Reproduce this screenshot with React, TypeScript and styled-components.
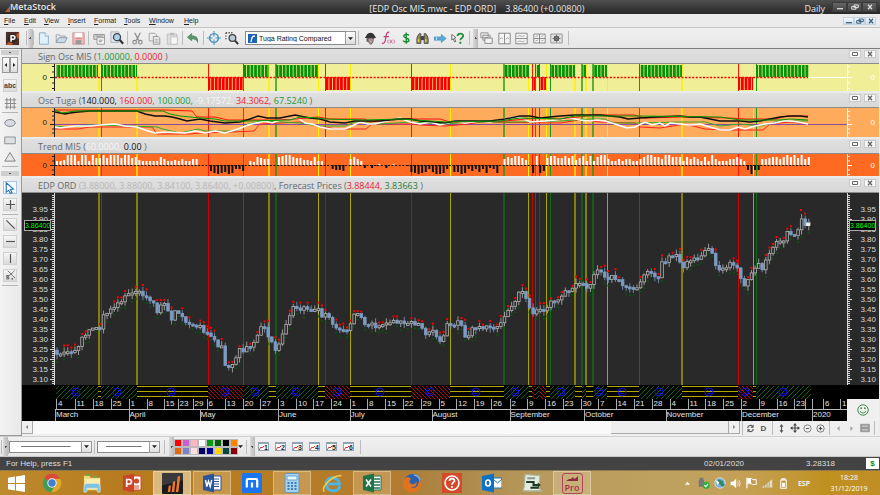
import React from "react";
import styled, { createGlobalStyle, css } from "styled-components";

const SANS = `"Liberation Sans", Arial, sans-serif`;
const UI = `"Open Sans", "Noto Sans", sans-serif`;

const GlobalStyle = createGlobalStyle`
  *, *::before, *::after { box-sizing: border-box; }
  html, body { margin: 0; padding: 0; }
  body { background: #ebebeb; font-family: ${SANS}; font-size: 8px; color: #222; overflow: hidden; }
  button, select, input { font: inherit; color: inherit; margin: 0; padding: 0; border: 0; background: none; border-radius: 0; }
  svg { display: block; }
`;

/* ---------- data ---------- */

type Tone = "y" | "g" | "r";

const X0 = 55;
const X1 = 847;
const STEP = 3.58;
const FIRST = 57;

/* x, tone and thickness of each signal line */
const LINES: [number, Tone, number][] = [
  [99, "y", 2], [101.5, "g", 1], [137, "y", 2], [208.5, "r", 1], [243.5, "g", 1], [269, "y", 2],
  [276, "g", 2], [318.5, "y", 1], [325.5, "r", 1], [350.5, "y", 1], [411.5, "r", 1], [450.5, "y", 1],
  [504, "g", 2], [528.5, "y", 1], [532.5, "r", 1], [535.5, "g", 1], [539.5, "r", 1], [546.5, "y", 1],
  [550.5, "g", 1], [575, "y", 2], [582, "g", 2], [586, "y", 2], [593, "g", 2], [607.5, "y", 1],
  [639.5, "g", 1], [682, "y", 2], [738.5, "r", 1], [753.5, "y", 1], [756.5, "g", 1],
];

/* start, end, tone and the centre of the face marker, if there is one */
const SEGMENTS: [number, number, Tone, number?][] = [
  [56, 98, "g", 76], [98, 101, "y"], [101, 137, "g", 117], [137, 208, "y", 171], [208, 243, "r", 225],
  [243, 269, "g", 255], [269, 276, "y"], [276, 318, "g", 296], [318, 325, "y"], [325, 350, "r", 337],
  [350, 411, "y", 380], [411, 450, "r", 430], [450, 504, "y", 476], [504, 529, "g", 515], [529, 532, "y"],
  [532, 535, "r"], [535, 539, "g"], [539, 546, "r"], [546, 550, "y"], [550, 575, "g", 561], [575, 582, "y"],
  [582, 586, "g"], [586, 593, "y"], [593, 607, "g", 599], [607, 639, "y", 622], [639, 682, "g", 659],
  [682, 738, "y", 709], [738, 753, "r", 745], [753, 756, "y"], [756, 811, "g", 783],
];

const TREND = [
  4, 4, 5, 10, 10, 10, 4, 10, 10, 4, 10, 7, 7, 10, 7, 10, 10, 10, 7, 10, 10, 7, 8, 5, 4, 4, 4, 4, 4, 8, 6, 4, 4, 5, 4, 6,
  4, 4, 6, 6, 0, 0, 0, -6, -8, -9, -8, -7, -9, -8, -4, -4, -6, 0, 4, 3, 8, 7, 6, 6, 0, 0, 8, 9, 10, 10, 8, 7, 7, 5, 5, 4,
  8, 4, 4, 0, 0, -4, -5, -5, -6, 0, 6, 8, 6, 4, -3, 0, -3, -1, 1, 0, -3, 0, 1, 0, 0, 0, -1, -7, -8, -9, -8, -7, -4, -7,
  -9, -9, -8, -4, 0, -7, -7, -9, -8, -4, -6, -4, -7, -4, -8, -3, -4, -8, 0, 6, 8, 7, 9, 9, 7, 5, 0, -8, 9, -8, -6, 7, 9,
  9, 7, 7, 9, 7, 9, 5, 7, 9, 4, 9, 4, 8, 10, 10, 6, 4, 4, 6, 4, 6, 6, 4, 4, 6, 8, 10, 10, 8, 8, 6, 10, 10, 8, 8, 8, 4, 8,
  6, 8, 6, 4, 8, 4, 10, 6, 4, 4, 4, 6, 6, 8, 6, 4, -5, -9, -5, -5, 6, 6, 7, 8, 8, 6, 8, 10, 8, 10, 7, 10, 6, 8, 10, 6, 8, 6,
];

const PRICE: [number, number][] = [
  [57, 352], [63, 354], [67, 353], [70, 355], [73, 348], [76, 353], [78, 347], [80, 342], [83, 338], [87, 332],
  [90, 330], [93, 328], [97, 328], [101, 330], [103, 317], [106, 313], [110, 310], [115, 305], [120, 302], [125, 298],
  [130, 295], [137, 291], [142, 295], [147, 298], [150, 302], [155, 303], [158, 313], [161, 305], [165, 302],
  [168, 313], [172, 320], [176, 311], [180, 313], [183, 320], [187, 323], [192, 324], [198, 325], [202, 330],
  [207, 335], [212, 337], [216, 343], [219, 351], [221, 343], [224, 366], [229, 367], [234, 365], [237, 355],
  [240, 345], [243, 351], [247, 345], [251, 347], [254, 343], [257, 335], [260, 327], [264, 327], [267, 335],
  [270, 342], [274, 347], [277, 352], [281, 338], [285, 330], [288, 322], [291, 310], [294, 305], [298, 308],
  [303, 309], [308, 310], [313, 313], [318, 308], [321, 315], [326, 315], [331, 320], [335, 327], [340, 330],
  [345, 332], [350, 327], [353, 320], [356, 311], [360, 315], [363, 323], [367, 327], [372, 325], [378, 327],
  [383, 323], [390, 323], [397, 322], [405, 323], [413, 323], [420, 325], [424, 334], [429, 335], [432, 328],
  [436, 337], [441, 342], [444, 335], [448, 323], [455, 323], [460, 322], [463, 333], [467, 339], [471, 330],
  [476, 327], [483, 327], [490, 328], [497, 325], [503, 320], [507, 313], [511, 307], [515, 300], [519, 290],
  [524, 292], [528, 303], [532, 312], [535, 314], [538, 303], [541, 313], [546, 312], [550, 303], [555, 300],
  [562, 297], [567, 291], [573, 288], [578, 284], [585, 285], [590, 288], [594, 275], [598, 268], [602, 274],
  [607, 277], [613, 278], [620, 280], [627, 289], [634, 290], [640, 283], [643, 275], [648, 272], [653, 276],
  [658, 278], [662, 263], [666, 260], [671, 255], [677, 253], [681, 268], [686, 263], [692, 260], [699, 257],
  [706, 249], [711, 252], [714, 260], [717, 269], [722, 270], [728, 265], [734, 263], [738, 267], [741, 280],
  [745, 288], [749, 277], [753, 270], [757, 265], [762, 268], [766, 260], [770, 253], [774, 247], [778, 237],
  [783, 241], [788, 232], [793, 233], [797, 237], [801, 219], [805, 227], [808, 224],
];

const priceAt = (x: number) => {
  const i = PRICE.findIndex((p) => p[0] >= x);
  if (i <= 0) return i === 0 ? PRICE[0][1] : PRICE[PRICE.length - 1][1];
  const [xa, ya] = PRICE[i - 1];
  const [xb, yb] = PRICE[i];
  return ya + ((yb - ya) * (x - xa)) / (xb - xa);
};

const noise = (n: number) => {
  const v = Math.sin(n * 127.1 + 31.7) * 43758.5453;
  return v - Math.floor(v);
};

const CANDLES = Array.from({ length: 211 }, (_, i) => {
  const x = FIRST + i * STEP;
  const a = priceAt(x - STEP) + (noise(i) - 0.5) * 5;
  const b = priceAt(x) + (noise(i + 1) - 0.5) * 5;
  const top = Math.min(a, b);
  const bottom = Math.max(a, b, top + 2);
  return {
    x, top, bottom, up: b <= a,
    high: top - noise(i + 300) * 5,
    low: bottom + noise(i + 700) * 5,
    sell: noise(i + 50) > 0.42,
    buy: noise(i + 90) > 0.5,
  };
});

const OSC: { color: string; width: number; points: string }[] = [
  { color: "#f22", width: 1, points: "55,129 78,129 90,127 152,127 157,134 180,134 190,134 200,133 232,132 254,131 260,124 300,122 318,126 330,128 335,129 366,129 372,124 410,124 420,125 445,126 468,124 480,122 560,123 580,120 600,122 635,123 640,127 660,128 685,124 705,129 725,130 763,130 770,124 790,122 808,124" },
  { color: "#3a3", width: 1, points: "55,126 65,127 90,125 130,126 157,127 163,129 180,133 198,129 205,131 235,131 248,124 262,121 300,123 320,126 345,126 355,122 380,124 410,122 445,124 470,122 520,122 560,121 590,119 605,119 613,123 640,123 680,122 705,122 720,126 740,124 760,126 780,121 808,121" },
  { color: "#fff", width: 1.5, points: "55,127 60,128 75,126 90,126 100,125 115,124 125,126 137,127 145,130 155,133 165,132 185,133 195,131 205,133 215,131 225,133 238,129 248,125 256,123 265,121 272,123 280,120 290,119 298,118 305,123 312,124 320,127 330,129 345,129 352,126 360,122 368,124 375,124 390,120 400,118 410,122 420,124 430,122 440,125 455,121 465,123 480,121 490,122 500,120 515,117 522,118 530,122 545,121 555,120 570,118 580,120 590,121 597,120 605,121 615,124 627,128 635,127 645,122 652,125 660,123 665,126 670,123 680,124 690,125 700,124 710,127 720,130 730,130 738,127 745,129 755,126 765,124 775,123 783,121 790,121 798,122 808,124" },
  { color: "#f11", width: 1, points: "55,110 165,110 192,111 197,117 215,117 228,120 275,120 295,119 318,117 330,119 365,119 370,122 395,119 440,119 450,122 505,121 525,119 545,118 560,119 595,115 634,115 645,118 680,117 730,118 745,119 775,119 787,116 808,116" },
  { color: "#111", width: 1.5, points: "55,112 60,113 65,114 70,113 78,112 90,111 110,111 137,111 145,114 155,116 165,116 172,117 180,119 187,121 200,119 210,121 225,123 240,122 250,119 258,116 267,118 280,118 290,116 295,115 300,116 310,118 320,119 330,122 345,123 355,121 370,121 380,121 390,120 400,119 410,119 420,121 435,122 445,123 455,121 470,121 490,121 505,119 520,116 530,116 540,118 550,117 560,116 575,115 590,115 600,115 610,116 620,117 628,119 640,118 655,117 680,116 690,117 700,117 710,119 720,121 730,121 740,121 750,122 760,121 770,119 780,117 790,116 800,116 808,117" },
  { color: "#090", width: 1, points: "55,110 62,113 75,111 163,111 170,114 180,116 200,118 215,119 225,121 250,121 290,120 300,117 318,118 325,119 365,120 400,119 415,120 445,122 500,121 520,118 560,119 575,116 640,116 720,117 740,120 780,120 790,119 808,120" },
];

const WEEKS: [number, string][] = [
  [56, "4"], [74.5, "11"], [92.5, "18"], [110.5, "25"], [128.5, "1"], [146.5, "8"], [163.5, "15"], [177.5, "23"],
  [192.5, "29"], [206.5, "6"], [224.5, "13"], [242.5, "20"], [260, "27"], [278, "3"], [296, "10"], [313, "17"],
  [331, "24"], [349.5, "1"], [367, "8"], [385, "15"], [402.5, "22"], [420.5, "29"], [438.5, "5"], [456, "12"],
  [473.5, "19"], [491, "26"], [509.5, "2"], [527, "9"], [545, "16"], [562.5, "23"], [580.5, "30"], [598, "7"],
  [615.5, "14"], [633.5, "21"], [651.5, "28"], [669.5, "4"], [687.5, "11"], [705, "18"], [723, "25"], [740.5, "2"],
  [758.5, "9"], [776.5, "16"], [794, "23"], [805, ""], [812, ""], [823, "6"], [840, "1"],
];
const MONTHS: [number, string][] = [
  [55, "March"], [128.5, "April"], [199.5, "May"], [278, "June"], [349.5, "July"], [431.5, "August"],
  [509.5, "September"], [584, "October"], [665.5, "November"], [741, "December"], [812, "2020"],
];
const PRICES = Array.from({ length: 18 }, (_, i) => (3.95 - i * 0.05).toFixed(2));

const columns = (cells: [number, string][]) =>
  cells.map((c, i) => `minmax(0, ${(i + 1 < cells.length ? cells[i + 1][0] : X1) - c[0]}fr)`).join(" ");

/* ---------- frame ---------- */

const Window = styled.div`
  min-height: 100vh;
  display: flex;
  flex-direction: column;
`;
const TitleBar = styled.header`
  height: 14px;
  display: flex;
  align-items: center;
  background: linear-gradient(#505050, #3c3c3c 45%, #282828);
  color: #e8e8e8;
  font: 9px/14px ${UI};
  white-space: pre;
`;
const Brand = styled.div`
  flex: 1;
  display: flex;
  align-items: center;
  padding-left: 5px;
  font-weight: 600;
  svg { margin-right: -2px; }
`;
const Caption = styled.div`
  display: flex;
  gap: 9px;
  padding-top: 4px;
  margin-right: 220px;
`;
const Period = styled.div`
  padding-top: 4px;
  margin-right: 7px;
`;
const CapButtons = styled.div<{ $light?: boolean }>`
  display: flex;
  margin-right: ${(p) => (p.$light ? 4 : 3)}px;
  button {
    width: ${(p) => (p.$light ? 11 : 15)}px;
    height: ${(p) => (p.$light ? 8 : 10)}px;
    display: grid;
    place-items: center;
    border: 1px solid ${(p) => (p.$light ? "#c3d3df" : "#3b3b3b")};
    background: ${(p) => (p.$light ? "linear-gradient(#f3f9fc,#cfe0ea)" : "linear-gradient(#666,#444)")};
    color: ${(p) => (p.$light ? "#416080" : "#ddd")};
  }
`;
const MenuBar = styled.nav`
  height: 14px;
  display: flex;
  align-items: center;
  border-bottom: 1px solid #c4c4c4;
  background: #ebebeb;
  font-size: 7px;
  padding-left: 4px;
`;
const MenuItem = styled.button<{ $w: number }>`
  width: ${(p) => p.$w}px;
  text-align: left;
  line-height: 12px;
  &::first-letter { text-decoration: underline; }
`;
const Spacer = styled.div`flex: 1;`;

const bar = css`
  display: flex;
  align-items: center;
  background: linear-gradient(#f1f1f1, #e6e6e6);
`;
const ToolBar = styled.div`
  ${bar}
  height: 21px;
  border-bottom: 1px solid #7d7d7d;
`;
const Tool = styled.button<{ $w?: number }>`
  width: ${(p) => p.$w ?? 18}px;
  height: 16px;
  flex: none;
  display: grid;
  place-items: center;
`;
const Sep = styled.i<{ $m?: number }>`
  width: 1px;
  height: 14px;
  margin: 0 ${(p) => p.$m ?? 1}px;
  background: #bdbdbd;
  flex: none;
`;
const Grip = styled.i`
  flex: none;
  width: 5px;
  height: 19px;
  background: radial-gradient(circle, #555 1px, transparent 1px), linear-gradient(90deg, #dadada, #b9b9b9);
`;
const Combo = styled.select<{ $w: number; $line?: boolean }>`
  appearance: none;
  flex: none;
  width: ${(p) => p.$w}px;
  height: ${(p) => (p.$line ? 12 : 14)}px;
  padding-left: ${(p) => (p.$line ? 2 : 13)}px;
  border: 1px solid #888;
  border-right: 0;
  font-size: 7px;
  color: #111;
  background: ${(p) => (p.$line ? "linear-gradient(#777,#777) center / 70% 1px no-repeat #fff" : "#fff")};
`;
const ComboWrap = styled.label<{ $gap?: number }>`
  display: flex;
  align-items: center;
  position: relative;
  flex: none;
  margin-left: ${(p) => p.$gap ?? 0}px;
  > svg:first-child { position: absolute; left: 3px; }
`;
const Drop = styled.span<{ $h: number }>`
  width: 11px;
  height: ${(p) => p.$h}px;
  display: grid;
  place-items: center;
  border: 1px solid #999;
  background: linear-gradient(#fff, #ddd);
`;

const Body = styled.div`
  flex: 1;
  display: flex;
  min-height: 387px;
`;
const Side = styled.aside`
  width: 22px;
  flex: none;
  display: flex;
  flex-direction: column;
  align-items: center;
  padding-right: 1px;
  border-right: 1px solid #999;
  border-bottom: 1px solid #999;
  background: linear-gradient(90deg, #f3f3f3, #e9e9e9);
`;
const SideGrip = styled.i<{ $gap: number }>`
  width: 18px;
  height: 5px;
  margin: ${(p) => p.$gap}px 0;
  flex: none;
  background: radial-gradient(circle, #555 1px, transparent 1px), #cfcfcf;
`;
const SideSep = styled.i`
  width: 16px;
  height: 1px;
  margin: 1px 0;
  background: #b5b5b5;
  flex: none;
`;
const SideTool = styled.button<{ $on?: boolean; $flat?: boolean }>`
  width: 14px;
  height: 13px;
  margin: 2px 0;
  flex: none;
  display: grid;
  place-items: center;
  border: 1px solid ${(p) => (p.$on ? "#a8c4e0" : p.$flat ? "transparent" : "#d0d0d0")};
  background: ${(p) => (p.$on ? "#f4f9ff" : p.$flat ? "none" : "linear-gradient(#f6f6f6,#dadada)")};
  color: #444;
  font-weight: bold;
  font-size: 7px;
  line-height: 8px;
`;
const Pager = styled.div`
  display: flex;
  margin: 1px 0 4px;
  button {
    width: 8px;
    height: 16px;
    display: grid;
    place-items: center;
    border: 1px solid #999;
    background: linear-gradient(#fff, #ddd);
  }
`;
const Charts = styled.main`
  flex: 1;
  min-width: 0;
  display: flex;
  flex-direction: column;
  padding-right: 1px;
`;
const Panel = styled.section<{ $grow?: boolean }>`
  display: flex;
  flex-direction: column;
  flex: ${(p) => (p.$grow ? "1 0 auto" : "none")};
  margin-bottom: ${(p) => (p.$grow ? 0 : 2)}px;
`;
const PanelHead = styled.div`
  height: 15px;
  display: flex;
  align-items: center;
  padding: 1px 3px 0 16px;
  background: linear-gradient(#e0e0e0, #d8d8d8);
  border-bottom: 1px solid #8c8c8c;
  color: #646a70;
  font: 9px/14px ${UI};
  white-space: pre;
`;
const Ink = styled.span<{ $c: string }>`color: ${(p) => p.$c};`;
const PanelButton = styled.button`
  width: 12px;
  height: 8px;
  margin: 0 0 5px 3px;
  display: grid;
  place-items: center;
  border: 1px solid #c9c9c9;
  background: #f8f8f8;
  color: #666;
`;
const Plot = styled.div<{ $bg: string; $h: number; $grow?: boolean }>`
  display: flex;
  min-height: ${(p) => p.$h}px;
  flex: ${(p) => (p.$grow ? "1 0 auto" : "none")};
  background: ${(p) => p.$bg};
`;
const Axis = styled.div<{ $right?: boolean; $c: string }>`
  width: ${(p) => (p.$right ? 32 : 33)}px;
  flex: none;
  display: flex;
  position: relative;
  flex-direction: ${(p) => (p.$right ? "row-reverse" : "row")};
  align-items: stretch;
  color: ${(p) => p.$c};
  padding-right: ${(p) => (p.$right ? 3 : 0)}px;
`;
const AxisLabels = styled.div<{ $many?: boolean }>`
  flex: 1;
  padding-top: ${(p) => (p.$many ? 12 : 1)}px;
  display: flex;
  flex-direction: column;
  justify-content: ${(p) => (p.$many ? "space-between" : "center")};
  text-align: right;
  line-height: 10px;
  padding-right: ${(p) => (p.$many ? 0 : 1)}px;
`;
const Tag = styled.output`
  position: absolute;
  top: 14%;
  left: 2px;
  width: 27px;
  height: 11px;
  border: 1px solid #aaa;
  background: #000;
  color: #0f0;
  font-size: 7px;
  line-height: 9px;
  text-align: center;
`;
const PlotSvg = styled.svg`
  flex: 1;
  min-width: 0;
  width: 100%;
  height: auto;
  align-self: stretch;
`;
const Ribbon = styled.div`
  height: 14px;
  display: flex;
  padding: 0 32px 0 33px;
  background: #000;
`;
const Timeline = styled.div`
  height: 22px;
  display: flex;
  background: #000;
  padding-left: 33px;
`;
const Scale = styled.div`
  flex: 1;
  min-width: 0;
  color: #e4e4e4;
`;
const ScaleRow = styled.div<{ $cols: string; $line?: boolean }>`
  display: grid;
  grid-template-columns: ${(p) => p.$cols};
  height: 11px;
  line-height: 10px;
  padding-left: ${(p) => (p.$line ? 1 : 0)}px;
  border-bottom: ${(p) => (p.$line ? "1px solid #bbb" : "0")};
  span { padding-left: ${(p) => (p.$line ? 2 : 1)}px; box-shadow: inset 1px 0 #aaa; white-space: nowrap; }
`;
const Face = styled.div`
  width: 32px;
  display: grid;
  place-items: center;
  background: #f0f0f0;
`;
const ScrollRow = styled.div`
  height: 15px;
  display: flex;
  align-items: flex-start;
  background: #efefef;
`;
const ScrollButton = styled.button`
  width: 11px;
  height: 13px;
  flex: none;
  display: grid;
  place-items: center;
  border: 1px solid #aaa;
  border-width: 0 1px 1px 0;
  background: #f0f0f0;
`;
const Track = styled.div`
  flex: 1;
  height: 13px;
  display: flex;
  justify-content: flex-end;
  background: #f9f9f9;
  &::after {
    content: "";
    width: 17%;
    border: 1px solid #aaa;
    border-width: 0 1px 1px 0;
    background: #eee;
  }
`;
const NavTool = styled.button`
  width: 13px;
  height: 13px;
  flex: none;
  display: grid;
  place-items: center;
  color: #555;
  font: bold 8px/13px ${SANS};
`;
const NavTools = styled.div`
  width: 139px;
  flex: none;
  display: flex;
  align-items: center;
  padding-left: 1px;
`;
const DrawBar = styled.div`
  ${bar}
  height: 21px;
  border-top: 1px solid #d0d0d0;
  border-bottom: 1px solid #c8c8c8;
`;
const Palette = styled.div`
  display: grid;
  grid-template-columns: repeat(8, 6px);
  grid-auto-rows: 6px;
  gap: 2px;
  margin: 0 1px;
`;
const Swatch = styled.button<{ $c: string }>`
  background: ${(p) => p.$c};
  box-shadow: 0 0 0 1px #bbb;
`;
const Template = styled.button`
  width: 17px;
  flex: none;
  display: grid;
  place-items: center;
  span {
    width: 11px;
    height: 9px;
    display: flex;
    align-items: center;
    justify-content: center;
    border: 1px solid #92a4b2;
    border-top-width: 2px;
    background: #fff;
    font: bold 7px/7px ${SANS};
  }
`;
const StatusBar = styled.footer`
  height: 13px;
  display: flex;
  align-items: center;
  padding-left: 6px;
  background: #434343;
  color: #dedede;
  line-height: 13px;
`;
const StatusCell = styled.span<{ $gap: number }>`margin-right: ${(p) => p.$gap}px;`;
const Money = styled.span`
  width: 13px;
  height: 11px;
  background: #fff;
  color: #0a8a1a;
  font-weight: bold;
  line-height: 11px;
  text-align: center;
  margin-right: 1px;
`;
const TaskBar = styled.div`
  height: 25px;
  display: flex;
  align-items: center;
  border-top: 1px solid #8e7a4c;
  background: linear-gradient(90deg, #bd8a2c 0%, #b77a1f 14%, #b77d24 32%, #b27b30 45%, #ab8748 51%, #b89a5e 62%, #c0a25f 78%, #c4a054 85%, #c0901f 94%, #bf8f26 100%);
`;
const Task = styled.button<{ $w?: number; $on?: 1 | 2 }>`
  width: ${(p) => p.$w ?? 38}px;
  height: 24px;
  margin: 0 ${(p) => (p.$w ? 0 : 1)}px;
  flex: none;
  display: grid;
  place-items: center;
  ${(p) => p.$on && css`
    background: rgba(255, 245, 220, ${p.$on === 1 ? 0.5 : 0.22});
    box-shadow: inset 0 0 0 1px rgba(255, 250, 230, 0.35);
  `}
`;
const ProBadge = styled.span`
  width: 21px;
  height: 21px;
  display: flex;
  flex-direction: column;
  align-items: center;
  justify-content: flex-end;
  border: 1px solid #b0455a;
  border-radius: 3px;
  color: #a8304a;
  font: 600 9px/11px ${UI};
`;
const Tray = styled.div`
  display: flex;
  align-items: center;
  margin-left: auto;
  color: #fff;
  font: 7px/11px ${UI};
`;
const Lang = styled.span`
  margin: 0 19px 0 5px;
  font-weight: 600;
`;
const Clock = styled.time`
  width: 40px;
  margin-right: 11px;
  text-align: center;
`;

/* ---------- icons ---------- */

const G = ({ s = 13, children, vb = 16 }: { s?: number; vb?: number; children: React.ReactNode }) => (
  <svg width={s} height={s} viewBox={`0 0 ${vb} ${vb}`} fill="none" aria-hidden="true">{children}</svg>
);
const Caret = ({ d = "down", c = "#222", s = 5 }: { d?: "down" | "left" | "right" | "up"; c?: string; s?: number }) => (
  <svg width={s} height={s} viewBox="0 0 6 6" aria-hidden="true">
    <path fill={c} d={{ down: "M0 1.5h6L3 4.8z", left: "M4.5 0v6L1 3z", right: "M1.5 0v6L5 3z", up: "M0 4.5h6L3 1z" }[d]} />
  </svg>
);
const WinGlyph = ({ k }: { k: "min" | "res" | "x" | "max" }) => (
  <svg width="8" height="6" viewBox="0 0 8 6" fill="none" stroke="currentColor" strokeWidth="1.3" aria-hidden="true">
    {k === "min" && <path d="M1 4.7h6" />}
    {k === "res" && <path d="M3 1h4.3v2.6H3zM.7 2.6H5v2.6H.7z" strokeWidth="1" />}
    {k === "x" && <path d="M2 .8l4 4.4M6 .8L2 5.2" />}
    {k === "max" && <path d="M1.5 1.5h5v3h-5z" strokeWidth="1" />}
  </svg>
);

const I = {
  power: <G s={15}><rect x="1" y="1" width="14" height="14" fill="#4a3028" /><path d="M1 15L15 1v6L7 15z" fill="#c05a28" /><circle cx="8" cy="8" r="5" fill="#322825" /><path d="M6.5 11.5V5h2.2a1.8 1.8 0 010 3.8H6.5" stroke="#fff" strokeWidth="1.6" /></G>,
  doc: <G><path d="M3 1h7l4 4v10H3z" fill="#dff1fb" stroke="#7fa3bb" /><path d="M10 1v4h4" stroke="#7fa3bb" fill="#fff" /></G>,
  folder: <G><path d="M1.5 13V3.5h4l1 1.500h6v2" stroke="#8a949c" fill="#eee" /><path d="M1.500 13l3-6H15l-3 6z" fill="#c9dbe6" stroke="#7d8f9c" /></G>,
  save: <G><path d="M1 1h14v14H1z" fill="#f0b9ba" stroke="#c58a8c" /><path d="M3.500 1h9v6h-9z" fill="#fff" /><path d="M4.500 10h7v5h-7z" fill="#999" /><path d="M4 7.500h8" stroke="#e05050" /></G>,
  print: <G><path d="M1 3h13v6H1z" fill="#ddd" stroke="#888" /><path d="M5 7h9v8H5z" fill="#fff" stroke="#888" /><path d="M3 5h9M7 10h5M7 12h4" stroke="#777" /></G>,
  preview: <G s={14}><path d="M1 1h9v12H1z" fill="#dfe7ec" stroke="#aab" /><circle cx="8" cy="7" r="4" fill="#a8d4ec" stroke="#444" strokeWidth="1.500" /><path d="M11 10l4 4.500" stroke="#333" strokeWidth="2.400" /></G>,
  cut: <G><path d="M4.500 1l5 9.500M11.500 1l-5 9.500" stroke="#888" strokeWidth="1.500" /><circle cx="4.500" cy="12.500" r="2.200" stroke="#888" strokeWidth="1.400" /><circle cx="11.500" cy="12.500" r="2.200" stroke="#888" strokeWidth="1.400" /></G>,
  copy: <G><path d="M1.500 1.500h7l2 2V11h-9z" fill="#eee" stroke="#999" /><path d="M6.500 5.500h6l2 2V15h-8z" fill="#eee" stroke="#888" /><path d="M8 9h5M8 11h5M8 13h5" stroke="#aaa" /></G>,
  paste: <G><path d="M1.500 2.500h12V15h-12z" fill="#ddd" stroke="#bbb" /><path d="M5 1h5v3H5z" fill="#bbb" /><path d="M6 6h8v9H6z" fill="#f7f7f7" stroke="#bbb" /></G>,
  undo: <G s={14}><path d="M1 7l6-5v3c5 0 8 3 6.500 9-1-3-3-4.500-6.500-4.500V12z" fill="#58936c" /></G>,
  target: <G s={14}><circle cx="8" cy="8" r="5" stroke="#3b8cbc" strokeWidth="1.700" /><path d="M8 0v16M0 8h16" stroke="#4b9cc8" strokeWidth="1.300" /><circle cx="8" cy="8" r="1.700" fill="#e9f4fa" /></G>,
  zoom: <G s={14}><path d="M1 2h9M1 2v9" stroke="#555" strokeDasharray="1.500 1.500" strokeWidth="1.500" /><circle cx="8.500" cy="8" r="3.800" fill="#bcd" stroke="#444" strokeWidth="1.500" /><path d="M11.500 11l3.500 4" stroke="#333" strokeWidth="2.200" /></G>,
  expert: <G s={13}><path d="M1 7C3 6 3 1 8 1s5 5 7 6c-4 1.500-10 1.500-14 0z" fill="#333" /><path d="M5 7.500h6.500c0 5-1.500 7-3 7.500C7 15 5 12 5 7.500z" fill="#b99" stroke="#444" /><path d="M4 8v4" stroke="#444" strokeWidth="1.500" /></G>,
  fx: <G s={14}><path d="M9.500 1.500C6.500.5 6 4 5.400 8S4 15 1 14M3 6.500h6" stroke="#c53a7a" strokeWidth="1.400" /><path d="M8.500 10c-1 1-1 3 0 4M10 10l3 4M13 10l-3 4M14.500 10c1 1 1 3 0 4" stroke="#cf5b8e" /></G>,
  dollar: <G s={12}><path d="M12 4.500C10 2.500 5 3 5 5.500S12 8 12 11 6 14 4 11.500M8.300.5v15" stroke="#148a2c" strokeWidth="1.800" /></G>,
  bino: <G s={13}><path d="M2 5l2-3h2v12H1V8zM14 5l-2-3h-2v12h5V8z" fill="#8d8a62" stroke="#444" /><path d="M6 5h4v5H6z" fill="#444" /><path d="M3 9v3M12 9v3" stroke="#ecd24a" strokeWidth="1.700" /></G>,
  arrow: <G s={13}><path d="M0 6h9V3l6 5-6 5v-3H0z" fill="#5aa9d6" stroke="#2f7db4" strokeWidth=".6" /><path d="M3 6v4" stroke="#fff" strokeWidth=".8" /></G>,
  help: <G s={13}><path d="M1 3l5 4-2 .5 2 4-1.500.7-2-4L1 10z" fill="#fff" stroke="#555" /><path d="M8 5c0-4 7-4 7-.3 0 2.600-3.500 2.600-3.500 5.300" stroke="#1b8c37" strokeWidth="2.200" /><circle cx="11.500" cy="13.300" r="1.400" fill="#1b8c37" /></G>,
  w1: <G><path d="M1 1h9v6H1zM3.500 4h9v6h-9z" fill="#e8e8e8" stroke="#888" /><path d="M6 7.500h9V14H6z" fill="#f4f4f4" stroke="#777" /></G>,
  w2: <G><path d="M1 1.500h14v13H1zM8 1.500v13" fill="#f4f4f4" stroke="#777" /><path d="M2 9l2-2 2 1.500M9.500 9l2-2 2 1.500" stroke="#999" /></G>,
  w3: <G><path d="M1 1.500h14v13H1zM1 8h14" fill="#f4f4f4" stroke="#777" /><path d="M3 5.500l3-1 3 1 3-1M3 12l3-1 3 1 3-1" stroke="#999" /></G>,
  w4: <G><path d="M1 2.500h14v11H1zM1 8h14M8 2.500v11" fill="#f4f4f4" stroke="#777" /><path d="M3 5.500l3-1M10 5.500l3-1M3 11l3-1M10 11l3-1" stroke="#999" /></G>,
  w5: <G><path d="M1 2.500h14v11H1z" fill="#e6e6e6" stroke="#888" /><circle cx="8" cy="8" r="2.500" stroke="#555" strokeWidth="1.800" /><path d="M8 3v10M3 8h10M4.500 4.500l7 7M11.500 4.500l-7 7" stroke="#666" strokeWidth="1" /></G>,
  grid: <G s={13}><path d="M1 3.500h14M1 8h14M1 12.500h14M3.500 1v14M8 1v14M12.500 1v14" stroke="#888" strokeWidth="1.200" /></G>,
  ellipse: <G s={12}><ellipse cx="8" cy="8" rx="7" ry="4.600" fill="#d5dbe0" stroke="#666" /></G>,
  rect: <G s={12}><path d="M1 4h14v9H1z" fill="#dce0e2" stroke="#777" /></G>,
  tri: <G s={12}><path d="M8 2l7 11.500H1z" fill="#e4e6e7" stroke="#666" /></G>,
  pointer: <G s={12}><path d="M3 1l9.500 8.500-4 .4 2.300 4.300-2.300 1.200L6.300 11 3 13.500z" fill="#fff" stroke="#2d76ae" strokeWidth="1.500" /></G>,
  plus: <G s={11}><path d="M8 1.500v13M1.500 8h13" stroke="#555" strokeWidth="1.700" /></G>,
  diag: <G s={11}><path d="M2 2l12 12" stroke="#555" strokeWidth="1.700" /></G>,
  hline: <G s={11}><path d="M1.500 8h13" stroke="#555" strokeWidth="1.700" /></G>,
  vline: <G s={11}><path d="M8 1.500v13" stroke="#555" strokeWidth="1.700" /></G>,
  pct: <G s={11}><path d="M4 1l11 11M14 1L2 12" stroke="#666" strokeWidth="1.300" /><path d="M5.500 8H2.500v2.500h3V13H2" stroke="#555" strokeWidth="1.300" /><circle cx="10.500" cy="13" r="1.200" fill="#555" /></G>,
  refresh: <G s={9}><path d="M3 7a5 5 0 019-2.500M13 9a5 5 0 01-9 2.500" stroke="#555" strokeWidth="2.200" /><path d="M13.500 1v5.500H8zM2.500 15V9.500H8z" fill="#555" /></G>,
  updown: <G s={9}><path d="M8 3v10" stroke="#555" strokeWidth="2" /><path d="M8 0l3.500 5h-7zM8 16l3.500-5h-7z" fill="#555" /></G>,
  move: <G s={10}><path d="M8 2v12M2 8h12" stroke="#444" strokeWidth="1.800" /><path d="M8 0l3 4H5zM8 16l3-4H5zM0 8l4-3v6zM16 8l-4-3v6z" fill="#444" /></G>,
  zin: <G s={9}><circle cx="8" cy="8" r="6.500" stroke="#666" strokeWidth="1.500" /><path d="M5 8h6M8 5v6" stroke="#444" strokeWidth="2" /></G>,
  zout: <G s={9}><circle cx="8" cy="8" r="6.500" stroke="#777" strokeWidth="1.500" /><path d="M5 8h6" stroke="#666" strokeWidth="2" /></G>,
  sheet: <G s={10}><path d="M1 2h14v12H1z" fill="#999" stroke="#888" /><path d="M3 5h10M3 11h10" stroke="#ddd" strokeWidth="1.500" /></G>,
};

const Smile = ({ s, c }: { s: number; c: string }) => (
  <G s={s}><circle cx="8" cy="8" r="7" stroke={c} strokeWidth="1.300" /><path d="M4 9.500c1.500 3.300 6.500 3.300 8 0" stroke={c} strokeWidth="1.400" /><circle cx="5.500" cy="5.500" r="1.200" fill={c} /><circle cx="10.500" cy="5.500" r="1.200" fill={c} /></G>
);

const APPS: { name: string; on?: 1 | 2; icon: React.ReactNode }[] = [
  { name: "Chrome", icon: <G s={20} vb={20}><circle cx="10" cy="10" r="9.300" fill="#e0a82a" /><path d="M10 10L2 5.300A9.300 9.300 0 0118.200 5.700H10z" fill="#d9493a" /><path d="M10 10l-8-4.700A9.300 9.300 0 009 19.300l4.200-7.200z" fill="#3f9c55" /><circle cx="10" cy="10" r="4.700" fill="#f3f3f3" /><circle cx="10" cy="10" r="3.700" fill="#3f7fd6" /></G> },
  { name: "Explorer", icon: <G s={21} vb={22}><path d="M2 3h6l1 2h10v13H2z" fill="#f0d878" /><path d="M4 2h5M11 4h6" stroke="#6aa84a" strokeWidth="1.500" /><path d="M3 6h16v11H3z" fill="#fbecb0" /><path d="M2 15c0-3 2-4 4-4h9c3 0 4 1 4 4v5h-3v-4H5v4H2z" fill="#7fc4dc" stroke="#cfeaf2" strokeWidth=".7" /></G> },
  { name: "PowerPoint", icon: <G s={20} vb={20}><path d="M10 3h9v14h-9z" fill="#fff" stroke="#cf4a28" /><circle cx="14.500" cy="8" r="2.600" fill="#cf4a28" /><path d="M12 13h5M12 15h5" stroke="#cf4a28" /><path d="M1 3l11-2.500v19L1 17z" fill="#cb4426" /><path d="M4.700 14V6.500h2.500a2.200 2.200 0 010 4.500H5" stroke="#fff" strokeWidth="1.700" /></G> },
  { name: "MetaStock", on: 1, icon: <G s={21} vb={20}><rect width="20" height="20" rx="1" fill="#1c1c1e" /><path d="M0 0h20v7L0 12z" fill="#55565a" opacity=".5" /><path d="M5.500 18l1-6h2l-.7 6zM9.200 18L10.500 8h2.200l-1 10zM13.200 18L15 3h2.300l-1.700 15z" fill="#ee7a2a" /></G> },
  { name: "Word", on: 2, icon: <G s={20} vb={20}><path d="M10 3h9v14h-9z" fill="#fff" stroke="#2f5597" /><path d="M12 6h5M12 8.500h5M12 11h5M12 13.500h5" stroke="#2f5597" /><path d="M1 3l11-2.500v19L1 17z" fill="#2b569a" /><path d="M3.500 7l1.300 6.500L6.500 8l1.700 5.500L9.700 7" stroke="#fff" strokeWidth="1.400" /></G> },
  { name: "Maxthon", icon: <G s={20} vb={20}><rect width="20" height="20" rx="1.500" fill="#1a75f2" /><path d="M4.800 14.500V7.200q0-1.200 1.200-1.200h8q1.200 0 1.200 1.200v7.300M10 9.500v5" stroke="#fff" strokeWidth="2.200" /></G> },
  { name: "Calculator", on: 2, icon: <G s={20} vb={20}><rect x="3" y=".5" width="14" height="19" rx="1.500" fill="#a9d1ec" stroke="#5d9cc6" /><path d="M5 3h10v4H5z" fill="#e9f6fd" stroke="#6aa6cc" /><path d="M5.500 10h9M5.500 13h9M5.500 16h9" stroke="#3c82b8" strokeWidth="2" strokeDasharray="2 1.500" /></G> },
  { name: "Internet Explorer", icon: <G s={21} vb={20}><path d="M17 12.500C15.500 19 4 18.500 4 10.500S16 3 16.500 10.500H6" stroke="#4db4e6" strokeWidth="3" /><path d="M2 18C-1 13 10 2 18.500 2.500" stroke="#f0c94a" strokeWidth="1.500" /></G> },
  { name: "Excel", on: 2, icon: <G s={20} vb={20}><path d="M10 3h9v14h-9z" fill="#fff" stroke="#23734a" /><path d="M12 6h6M12 9h6M12 12h6M12 15h6" stroke="#23734a" strokeWidth="1.400" /><path d="M1 3l11-2.500v19L1 17z" fill="#217346" /><path d="M4 6.500l5 7M9 6.500l-5 7" stroke="#fff" strokeWidth="1.600" /></G> },
  { name: "Firefox", icon: <G s={20} vb={20}><circle cx="10.500" cy="9.500" r="8.500" fill="#2e5fae" /><path d="M5 4c2 0 3 1 4 2-2 1-2 4 .5 5s4-.5 5-2c1 4-3 6-6 5 5 3 9-2 8.500-9 5 7 .5 14.500-7 14.500S-.5 12 1.500 5c.5 1 1 1.500 1.500 1.500C3.500 5 4 4.500 5 4z" fill="#e2731d" /><path d="M12 2c3 .5 5 2 6 5" stroke="#6fb4e6" strokeWidth="1.500" /></G> },
  { name: "Help", icon: <G s={20} vb={20}><rect width="20" height="20" fill="#d24a29" /><circle cx="10" cy="10" r="7" stroke="#fff" strokeWidth="1.600" /><path d="M7.500 8c0-3 5-3 5-.3 0 1.700-2.500 1.800-2.500 4" stroke="#fff" strokeWidth="1.700" /><circle cx="10" cy="14" r="1.100" fill="#fff" /></G> },
  { name: "Outlook", icon: <G s={20} vb={20}><path d="M11 5h9v10h-9z" fill="#fff" stroke="#1a75c2" /><path d="M11 6l4.500 4L20 6" stroke="#1a75c2" /><path d="M0 3l12-2.500v19L0 17z" fill="#0d72c6" /><ellipse cx="6" cy="10" rx="2.300" ry="3" stroke="#fff" strokeWidth="1.700" /></G> },
  { name: "Charts", icon: <G s={21} vb={20}><path d="M3 1.500l14 1-1 12 3 2.500H1l1-3z" fill="#e4ebdf" stroke="#a9b8a4" /><path d="M5 4h8l-1 2H5z" fill="#8a9a92" /><path d="M4 8.500h7v3h5M8 14h8" stroke="#1d3b22" strokeWidth="2" /><path d="M15 9l3 2.500-3 2z" fill="#1d3b22" /></G> },
  { name: "Pro", on: 2, icon: null },
];

/* ---------- chart pieces ---------- */

const VLines = ({ y, h, soft }: { y: number; h: number; soft?: boolean }) => (
  <g>
    {LINES.map(([x, t, w]) => (
      <rect key={x} x={w === 2 ? x - 1 : Math.floor(x)} y={y} width={w} height={h}
        fill={soft ? { y: "#a8a400", g: "#0b7012", r: "#d00000" }[t] : { y: "#fdf000", g: "#1a9a10", r: "#ff1500" }[t]}
        opacity={w === 2 ? 0.7 : 1} />
    ))}
  </g>
);

const Ticks = ({ h, minor, major, right }: { h: number; minor: number[]; major: number[]; right?: boolean }) => (
  <svg width="7" height="100%" viewBox={`0 0 7 ${h}`} preserveAspectRatio="none" stroke="currentColor" aria-hidden="true">
    <g transform={right ? "matrix(-1 0 0 1 7 0)" : undefined}>
      <path d={`M6.500 0v${h}`} />
      {minor.map((y) => <path key={y} d={`M4 ${y}h3`} />)}
      {major.map((y) => <path key={y} d={`M2 ${y}h5`} />)}
    </g>
  </svg>
);

const PanelChrome = ({ children }: { children: React.ReactNode }) => (
  <PanelHead>
    <span>{children}</span>
    <Spacer />
    <PanelButton aria-label="Maximize panel"><WinGlyph k="max" /></PanelButton>
    <PanelButton aria-label="Close panel"><WinGlyph k="x" /></PanelButton>
  </PanelHead>
);

const Indicator = ({ title, bg, top, h, zero, minor, children }: {
  title: React.ReactNode; bg: string; top: number; h: number; zero: number; minor: number[]; children: React.ReactNode;
}) => (
  <Panel>
    <PanelChrome>{title}</PanelChrome>
    <Plot $bg={bg} $h={h}>
      <Axis $c="#222"><AxisLabels>0</AxisLabels><Ticks h={h} minor={minor} major={[zero]} /></Axis>
      <PlotSvg viewBox={`${X0} ${top} ${X1 - X0} ${h}`} preserveAspectRatio="none" height={h}>{children}</PlotSvg>
      <Axis $right $c="#fff"><AxisLabels>0</AxisLabels><Ticks h={h} minor={minor} major={[zero]} right /></Axis>
    </Plot>
  </Panel>
);

const SignPlot = () => (
  <>
    <VLines y={64} h={27} />
    {SEGMENTS.filter((s) => s[2] !== "y").map(([a, b, t]) => (
      <rect key={a} x={a} y={t === "g" ? 65 : 77} width={Math.min(b, 809) - a} height={t === "g" ? 12 : 13} fill={`url(#bars-${t})`} />
    ))}
    <path d="M55 77.500H808" stroke="#f00" strokeWidth="1.500" strokeDasharray="2 1.580" />
    <path d="M809 77.500H847" stroke="#fff" />
    <defs>
      {(["g", "r"] as const).map((t) => (
        <pattern key={t} id={`bars-${t}`} width={STEP} height="40" patternUnits="userSpaceOnUse">
          <rect width="2.800" height="40" fill={t === "g" ? "#089208" : "#f90000"} />
        </pattern>
      ))}
    </defs>
  </>
);

const OscPlot = () => (
  <>
    <VLines y={108} h={29} />
    <path d="M55 124.500H847" stroke="#8d4a9c" />
    {OSC.map((l, i) => <polyline key={i} points={l.points} fill="none" stroke={l.color} strokeWidth={l.width} />)}
  </>
);

const TrendPlot = () => (
  <>
    <VLines y={154} h={22} />
    {TREND.slice(0, 211).map((v, i) => (
      <rect key={i} x={FIRST - 1 + i * STEP} y={v > 0 ? 165 - v : 165} width="2" height={Math.abs(v)} fill={v > 0 ? "#fff" : "#111"} />
    ))}
    <path d="M55 165.500H809" stroke="#111" strokeDasharray="2 1.580" />
  </>
);

const PricePlot = () => (
  <>
    <VLines y={193} h={192} soft />
    {CANDLES.map((c) => (
      <g key={c.x} stroke={c.up ? "#b4b4b4" : "#7c9cc4"} strokeWidth=".8">
        <path d={`M${c.x} ${c.high}V${c.top}M${c.x} ${c.bottom}V${c.low}`} />
        <rect x={c.x - 1.3} y={c.top} width="2.600" height={c.bottom - c.top} fill={c.up ? "#292929" : "#7c9cc4"} />
      </g>
    ))}
    {CANDLES.filter((c) => c.sell).map((c) => <rect key={c.x} x={c.x - 1} y={c.high - 3} width="2" height="2" fill="#f00" />)}
    {CANDLES.filter((c) => c.buy).map((c) => <rect key={c.x} x={c.x - 1} y={c.low + 2} width="2" height="1.500" fill="#065a0c" />)}
    <rect x="800" y="209" width="2" height="2" fill="#f00" />
    <rect x="806" y="223" width="4" height="3" fill="#eee" />
  </>
);

const RibbonPlot = () => (
  <PlotSvg viewBox={`${X0} 385 ${X1 - X0} 14`} preserveAspectRatio="none" height="14">
    <defs>
      <pattern id="hatch-g" width="5" height="5" patternUnits="userSpaceOnUse"><path d="M-1 6L6-1M-1 1l2-2M4 6l2-2" stroke="#0a6412" /></pattern>
      <pattern id="hatch-r" width="4" height="4" patternUnits="userSpaceOnUse"><path d="M-1-1l6 6M3-1l2 2M-1 3l2 2" stroke="#b00a0a" /></pattern>
    </defs>
    {SEGMENTS.map(([a, b, t]) => t === "y"
      ? <path key={a} d={`M${a} 386.500H${b}M${a} 391.500H${b}M${a} 396.500H${b}`} stroke="#b0a800" />
      : <rect key={a} x={a} y="386" width={b - a} height="13" fill={`url(#hatch-${t})`} />)}
    {SEGMENTS.filter((s) => s[3]).map(([a, , , x]) => (
      <g key={a} stroke="#1010e0" fill="none">
        <circle cx={x} cy="392" r="4" />
        <path d={`M${x! - 2} 393q2 2 4 0M${x! - 2} 390.500h1M${x! + 1} 390.500h1`} />
      </g>
    ))}
  </PlotSvg>
);

const priceTicks = Array.from({ length: 18 }, (_, i) => 16.5 + i * 10);
const priceMinor = Array.from({ length: 95 }, (_, i) => 2.5 + i * 2);

const PriceAxis = ({ right }: { right?: boolean }) => (
  <Axis $right={right} $c="#d8d8d8">
    <AxisLabels $many>{PRICES.map((p) => <span key={p}>{p}</span>)}</AxisLabels>
    <Ticks h={192} minor={priceMinor} major={priceTicks} right={right} />
    <Tag>3.86400</Tag>
  </Axis>
);

const COLORS = ["#f00", "#cc5fd0", "#ffb6c4", "#fff", "#089a10", "#055c0a", "#000", "#ff8400", "#e06a10", "#8080c8", "#ffdede", "#000060", "#000098", "#ffd800", "#054840", "#880008"];

const T = ({ n, w }: { n: keyof typeof I; w?: number }) => <Tool $w={w} aria-label={n}>{I[n]}</Tool>;
const S = ({ n, on, flat }: { n: keyof typeof I; on?: boolean; flat?: boolean }) => <SideTool $on={on} $flat={flat} aria-label={n}>{I[n]}</SideTool>;

const MENU: [string, number][] = [["File", 20], ["Edit", 20], ["View", 24], ["Insert", 26], ["Format", 30], ["Tools", 25], ["Window", 35], ["Help", 20]];

export default function App() {
  return (
    <Window>
      <GlobalStyle />
      <TitleBar>
        <Brand>
          <svg width="7" height="9" viewBox="0 0 7 9" aria-hidden="true"><path d="M0 9L5 3v6z" fill="#a8653a" /></svg>
          MetaStock
        </Brand>
        <Caption><span>[EDP Osc MI5.mwc - EDP ORD]</span><span>3.86400 (+0.00800)</span></Caption>
        <Period>Daily</Period>
        <CapButtons>
          <button aria-label="Minimize"><WinGlyph k="min" /></button>
          <button aria-label="Restore"><WinGlyph k="res" /></button>
          <button aria-label="Close"><WinGlyph k="x" /></button>
        </CapButtons>
      </TitleBar>
      <MenuBar>
        {MENU.map(([m, w]) => <MenuItem key={m} $w={w}>{m}</MenuItem>)}
        <Spacer />
        <CapButtons $light>
          <button aria-label="Minimize chart"><WinGlyph k="min" /></button>
          <button aria-label="Restore chart"><WinGlyph k="res" /></button>
          <button aria-label="Close chart"><WinGlyph k="x" /></button>
        </CapButtons>
      </MenuBar>
      <ToolBar>
        <T n="power" w={25} /><Sep $m={1} /><Grip /><Sep $m={0} />
        <T n="doc" /><T n="folder" /><T n="save" w={17} /><Sep />
        <T n="print" /><T n="preview" /><Sep />
        <T n="cut" w={17} /><T n="copy" w={17} /><T n="paste" /><Sep />
        <T n="undo" /><Sep />
        <T n="target" w={17} /><T n="zoom" w={19} />
        <ComboWrap $gap={4}>
          <svg width="9" height="9" viewBox="0 0 9 9" aria-hidden="true"><rect width="9" height="9" fill="#1d62b4" /><path d="M3 8l1-4.500Q4.500 2 7 2" stroke="#fff" strokeWidth="1.300" fill="none" /></svg>
          <Combo $w={100} aria-label="Template"><option>Tuga Rating Compared</option></Combo>
          <Drop $h={14}><Caret /></Drop>
        </ComboWrap>
        <Sep $m={2} />
        <T n="expert" w={18} /><T n="fx" /><T n="dollar" w={17} /><T n="bino" w={17} /><T n="arrow" /><T n="help" w={17} />
        <Sep $m={3} /><Grip />
        <T n="w1" w={17} /><T n="w2" w={18} /><T n="w3" w={17} /><T n="w4" /><T n="w5" w={17} />
        <Sep $m={3} />
      </ToolBar>
      <Body>
        <Side>
          <SideGrip $gap={1} />
          <Pager>
            <button aria-label="Previous"><Caret d="left" s={4} /></button>
            <button aria-label="Next"><Caret d="right" s={4} /></button>
          </Pager>
          <SideTool>abc</SideTool>
          <S n="grid" flat />
          <SideSep />
          <S n="ellipse" flat /><S n="rect" flat /><S n="tri" flat />
          <SideSep />
          <SideGrip $gap={3} />
          <S n="pointer" on /><S n="plus" />
          <SideSep />
          <S n="diag" /><S n="hline" /><S n="vline" /><S n="pct" />
          <SideSep />
        </Side>
        <Charts>
          <Indicator top={64} h={27} zero={13.5} minor={[2.5, 8, 19, 24.5]} bg="#f0ee96"
            title={<>Sign Osc MI5 (<Ink $c="#229a33">1.00000, </Ink><Ink $c="#f0222c">0.0000</Ink> )</>}>
            <SignPlot />
          </Indicator>
          <Indicator top={108} h={29} zero={16.5} minor={[3.5, 8, 12, 21, 25]} bg="#ffab5c"
            title={<>Osc Tuga (<Ink $c="#111">140.000, </Ink><Ink $c="#f0222c">160.000, </Ink><Ink $c="#229a33">100.000, </Ink><Ink $c="#f6f6f6">-9.17572, </Ink><Ink $c="#f0222c">34.3062, </Ink><Ink $c="#229a33">67.5240</Ink> )</>}>
            <OscPlot />
          </Indicator>
          <Indicator top={154} h={22} zero={11.5} minor={[2.5, 7, 16, 20.5]} bg="#ff6a22"
            title={<>Trend MI5 (<Ink $c="#f6f6f6">60.0000, </Ink><Ink $c="#111">0.00</Ink> )</>}>
            <TrendPlot />
          </Indicator>
          <Panel $grow>
            <PanelChrome>EDP ORD <Ink $c="#b8b8b8">(3.88000, 3.88000, 3.84100, 3.86400, +0.00800)</Ink>, Forecast Prices (<Ink $c="#f0222c">3.88444, </Ink><Ink $c="#2c7a36">3.83663</Ink> )</PanelChrome>
            <Plot $bg="#292929" $h={192} $grow>
              <PriceAxis />
              <PlotSvg viewBox={`${X0} 193 ${X1 - X0} 192`} preserveAspectRatio="none"><PricePlot /></PlotSvg>
              <PriceAxis right />
            </Plot>
            <Ribbon><RibbonPlot /></Ribbon>
            <Timeline>
              <Scale>
                <ScaleRow $cols={columns(WEEKS)} $line>{WEEKS.map(([x, l]) => <span key={x}>{l}</span>)}</ScaleRow>
                <ScaleRow $cols={columns(MONTHS)}>{MONTHS.map(([x, l]) => <span key={x}>{l}</span>)}</ScaleRow>
              </Scale>
              <Face><Smile s={12} c="#3d8a4a" /></Face>
            </Timeline>
          </Panel>
          <ScrollRow>
            <ScrollButton aria-label="Scroll left"><Caret d="left" c="#888" s={4} /></ScrollButton>
            <Track />
            <ScrollButton aria-label="Scroll right"><Caret d="right" c="#888" s={4} /></ScrollButton>
            <NavTools>
              <Sep $m={1} />
              <NavTool aria-label="Refresh">{I.refresh}</NavTool>
              <NavTool>D</NavTool>
              <Sep $m={2} />
              <NavTool aria-label="Scale">{I.updown}</NavTool>
              <NavTool aria-label="Move">{I.move}</NavTool>
              <NavTool aria-label="Zoom out">{I.zout}</NavTool>
              <NavTool aria-label="Zoom in">{I.zin}</NavTool>
              <Sep $m={2} />
              <NavTool aria-label="Back"><Caret d="left" c="#aaa" /></NavTool>
              <NavTool aria-label="Forward"><Caret d="right" c="#aaa" /></NavTool>
              <NavTool aria-label="Sheet">{I.sheet}</NavTool>
              <Sep $m={3} />
            </NavTools>
          </ScrollRow>
        </Charts>
      </Body>
      <DrawBar>
        <Sep $m={1} /><Grip /><Sep $m={0} />
        <ComboWrap><Combo $w={72} $line aria-label="Line style"><option aria-label="Solid" /></Combo><Drop $h={12}><Caret /></Drop></ComboWrap>
        <Sep $m={2} />
        <ComboWrap><Combo $w={52} $line aria-label="Line weight"><option aria-label="Thin" /></Combo><Drop $h={12}><Caret /></Drop></ComboWrap>
        <Sep $m={4} /><Grip />
        <Palette>{COLORS.map((c) => <Swatch key={c} $c={c} aria-label={c} />)}</Palette>
        <Caret />
        <Sep $m={3} /><Grip />
        {[1, 2, 3, 4, 5, 6].map((n) => (
          <Template key={n} aria-label={`Template ${n}`}>
            <span><svg width="5" height="7" viewBox="0 0 5 7" fill="none" aria-hidden="true"><path d="M0 6l2-3 1 1 2-2" stroke="#d33" /></svg>{n}</span>
          </Template>
        ))}
        <Sep $m={3} />
      </DrawBar>
      <StatusBar>
        <span>For Help, press F1</span>
        <Spacer />
        <StatusCell $gap={62}>02/01/2020</StatusCell>
        <StatusCell $gap={31}>3.28318</StatusCell>
        <Money>$</Money>
      </StatusBar>
      <TaskBar>
        <Task $w={32} aria-label="Start"><G s={17}><path d="M0 2.500l6.500-1V7.500H0zM7.500 1.300L16 0v7.500H7.500zM0 8.500h6.500v6l-6.500-1zM7.500 8.500H16V16l-8.500-1.300z" fill="#fff" /></G></Task>
        {APPS.map((a) => (
          <Task key={a.name} $on={a.on} aria-label={a.name}>
            {a.icon ?? <ProBadge><svg width="13" height="6" viewBox="0 0 13 6" aria-hidden="true"><path d="M0 5l3-2h2l2-2 1 2 2-1 2-2v5z" fill="#8e2a40" /></svg>Pro</ProBadge>}
          </Task>
        ))}
        <Tray>
          <Tool $w={16} aria-label="Hidden icons"><Caret d="up" c="#fff" /></Tool>
          <Tool $w={16} aria-label="USB"><G s={12}><path d="M2 1h5v3H2zM1 4h7v9H1z" fill="#777" /><circle cx="11" cy="11" r="4.800" fill="#2fae3c" /><path d="M8.500 11l2 2 3-4" stroke="#fff" strokeWidth="1.500" /></G></Tool>
          <Tool $w={16} aria-label="Globe"><G s={12}><circle cx="8" cy="8" r="7" fill="#7fb0d4" stroke="#dfe9ee" /><path d="M5 3c3 0 4 2 6 2s1 4 3 5-3 4-4 2-5-2-5-9z" fill="#2f8a6a" /><path d="M2 4l5 3-2 4z" fill="#fff" /></G></Tool>
          <Tool $w={15} aria-label="Volume"><G s={11}><path d="M1 5.500h3.500L9 1v14l-4.500-4.500H1z" fill="#fff" /><path d="M11 5q2 3 0 6M13 3q3.500 5 0 10" stroke="#fff" /></G></Tool>
          <Tool $w={16} aria-label="Action center"><G s={12}><path d="M2.500 1v14" stroke="#fff" strokeWidth="1.500" /><path d="M3 2h6l1 1.500h5v6.500h-5L9 9H3" stroke="#fff" strokeWidth="1.300" /><path d="M3 2h5v6H3z" fill="#fff" /></G></Tool>
          <Tool $w={16} aria-label="Network"><G s={12}><path d="M1 14L15 3v11z" fill="#e8ddc0" /><path d="M5 10v4M8 8v6M11 6v8" stroke="#a58d5a" /></G></Tool>
          <Tool $w={18} aria-label="Battery"><G s={11}><path d="M4 3h8v12H4zM6 1h4v2H6z" stroke="#fff" strokeWidth="1.500" /><path d="M6 7h4v6H6z" fill="#fff" /></G></Tool>
          <Lang>ESP</Lang>
          <Clock>18:28<br />31/12/2019</Clock>
        </Tray>
      </TaskBar>
    </Window>
  );
}
